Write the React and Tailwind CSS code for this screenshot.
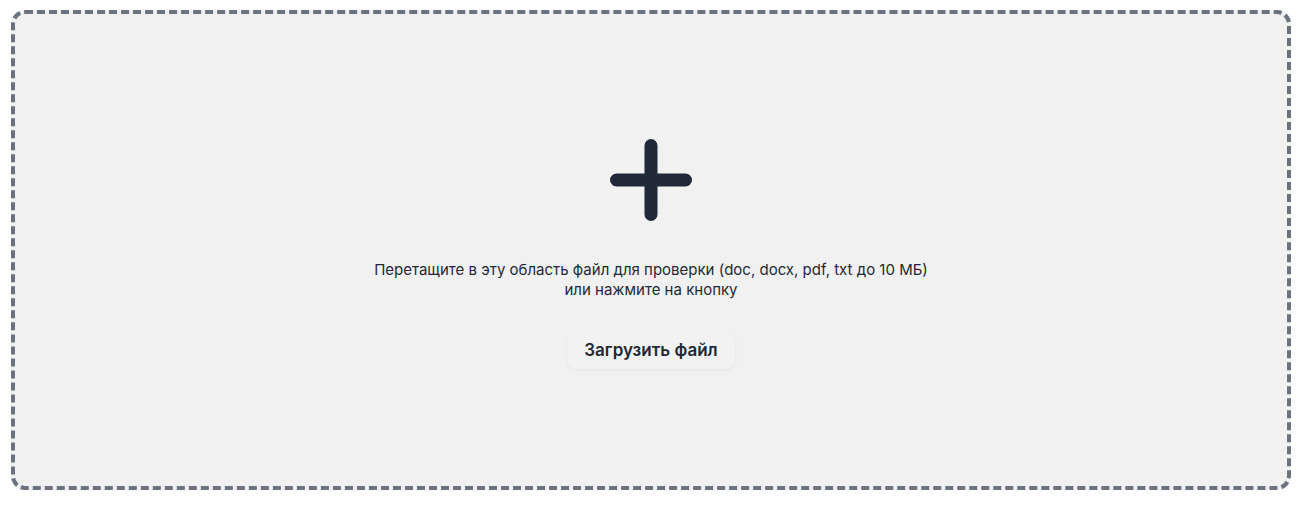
import React from 'react';

const PlusIcon = () => (
  <svg width="82" height="82" viewBox="0 0 82 82" fill="none" className="text-[#1f2937]">
    <path d="M41 6.5v69M6.5 41h69" stroke="currentColor" strokeWidth="13" strokeLinecap="round" />
  </svg>
);

const App = () => {
  return (
    <div className="min-h-screen bg-white pt-[10px] pl-[11px]" style={{ fontFamily: 'Inter, "Noto Sans", sans-serif' }}>
      <div className="w-[1280px] h-[480px] rounded-[14px] border-4 border-dashed border-[#6b7280] bg-[#f1f1f1] flex flex-col items-center justify-center pt-2">
        <PlusIcon />
        <p className="mt-[39px] text-center text-[15px] leading-5 text-[#1f2937]">
          Перетащите в эту область файл для проверки (doc, docx, pdf, txt до 10 МБ)
          <br />
          или нажмите на кнопку
        </p>
        <button className="mt-[33px] h-9 px-[17px] rounded-lg bg-[#f2f2f2] shadow-[0_1px_3px_rgba(0,0,0,0.06)] text-[17px] font-semibold text-[#1f2937]">
          Загрузить файл
        </button>
      </div>
    </div>
  );
};

export default App;
